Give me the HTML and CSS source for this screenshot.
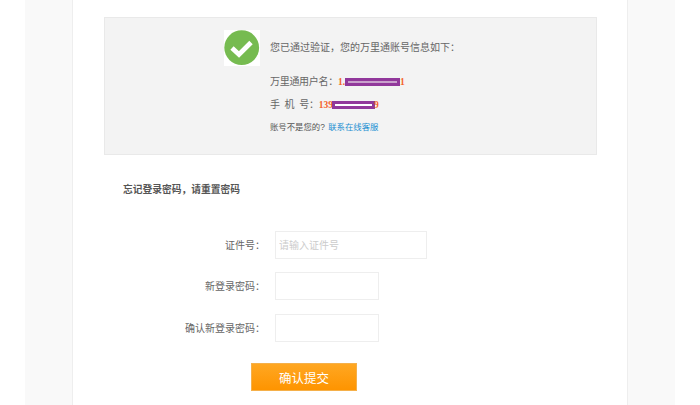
FILE: index.html
```html
<!DOCTYPE html>
<html lang="zh-CN">
<head>
<meta charset="utf-8">
<title>忘记登录密码</title>
<link rel="stylesheet" href="styles.css">
</head>
<body>
<div class="band">
  <main class="sheet">
    <section class="panel">
      <div class="tick">
        <svg width="36" height="36" viewBox="0 0 36 36" aria-hidden="true">
          <rect width="36" height="36" fill="#fff"/>
          <circle cx="17.7" cy="17.7" r="17.4" fill="#76bb50"/>
          <path d="M8 18 L15 24.5 L27 12.5" fill="none" stroke="#fff" stroke-width="4.8"/>
        </svg>
      </div>
      <div class="info">
        <p class="lead">您已通过验证，您的万里通账号信息如下：</p>
        <p class="row first">万里通用户名：<b class="val">1.<span class="mask m1"></span>1</b></p>
        <p class="row second">手 机 号：<b class="val">139<span class="mask m2"></span>9</b></p>
        <p class="note">账号不是您的? <a href="#">联系在线客服</a></p>
      </div>
    </section>
    <h2 class="title">忘记登录密码，请重置密码</h2>
    <form class="form">
      <div class="field"><label>证件号：</label><input class="wide" placeholder="请输入证件号"></div>
      <div class="field"><label>新登录密码：</label><input class="short"></div>
      <div class="field"><label>确认新登录密码：</label><input class="short"></div>
      <button type="button" class="submit">确认提交</button>
    </form>
  </main>
</div>
</body>
</html>
```
FILE: styles.css
```css
* { box-sizing: border-box; }
html, body { margin: 0; height: 405px; overflow: hidden; background: #fff; }
body { font-family: "Liberation Sans", "Noto Sans CJK SC", sans-serif; color: #666; font-size: 10px; }
.band { margin: 0 25px; padding: 0 47px; height: 405px; background: #f9f9f9; }
.sheet { height: 405px; background: #fff; border-left: 1px solid #eee; border-right: 1px solid #eee; padding-top: 17px; }
.panel { margin: 0 30px 0 31px; height: 138px; background: #f3f3f3; border: 1px solid #e9e9e9; display: flex; padding: 12px 0 0 119px; }
.tick { width: 36px; height: 36px; margin-right: 10px; }
.tick svg { display: block; }
.info { padding-top: 11px; }
.info p { margin: 0; }
.lead { font-size: 10px; line-height: 14px; }
.row { font-size: 10px; line-height: 14px; }
.first { margin-top: 20px !important; letter-spacing: -0.3px; }
.second { margin-top: 9px !important; word-spacing: 2.2px; letter-spacing: -0.2px; }
.note { font-size: 8.4px; line-height: 12px; margin-top: 9px !important; color: #555; }
.note a { color: #1b8fd2; text-decoration: none; margin-left: 1px; }
.val { font-family: "Liberation Serif", serif; font-size: 9.5px; color: #f3622a; letter-spacing: 0; }
.mask { display: inline-block; height: 8px; background: #fff; border: 3px solid #91389b; vertical-align: -1px; }
.m1 { width: 55px; background: #c9a0cc; }
.m2 { width: 43px; margin-left: -1px; margin-right: -1px; }
.title { margin: 29px 0 0 50px; font-size: 9.75px; line-height: 12px; font-weight: bold; color: #555; }
.form { margin-top: 35px; }
.field { display: flex; align-items: center; height: 28px; margin-bottom: 14px; }
.field:nth-child(1) { margin-bottom: 13px; }
.field label { width: 202px; text-align: right; font-size: 10px; padding: 0 10px 2px 0; color: #666; }
.field input { height: 28px; border: 1px solid #eee; background: #fff; padding: 0 3px; font: 10px "Liberation Sans", "Noto Sans CJK SC", sans-serif; outline: none; }
.field input::placeholder { color: #ccc; }
.wide { width: 152px; }
.short { width: 104px; }
.submit { display: block; width: 106px; height: 28px; margin: 21px 0 0 178px; padding: 0; border: 1px solid #f5b04a; background: linear-gradient(#ffa722, #fe9400); color: #fff; font: 12.5px "Liberation Sans", "Noto Sans CJK SC", sans-serif; }
```
